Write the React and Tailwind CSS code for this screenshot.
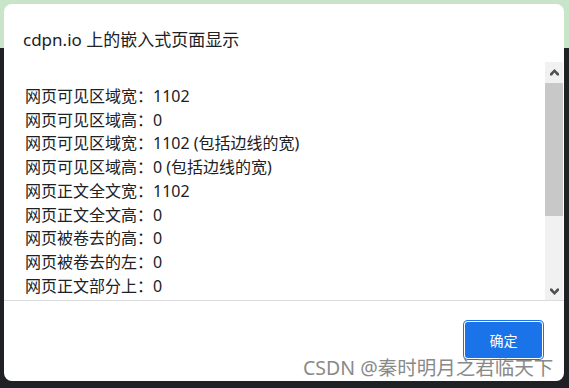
export default function App() {
  const rows = [
    "网页可见区域宽：1102",
    "网页可见区域高：0",
    "网页可见区域宽：1102 (包括边线的宽)",
    "网页可见区域高：0 (包括边线的宽)",
    "网页正文全文宽：1102",
    "网页正文全文高：0",
    "网页被卷去的高：0",
    "网页被卷去的左：0",
    "网页正文部分上：0",
  ];
  const font = { fontFamily: '"Noto Sans", "Noto Sans CJK SC", sans-serif' };
  return (
    <div
      className="relative w-[569px] h-[388px] overflow-hidden pt-[4px] pl-[4px] bg-[linear-gradient(to_bottom,#c8e4c9_48px,#202124_48px)]"
      style={font}
    >
      <div className="w-[560px] h-[377px] bg-white rounded-[8px] flex flex-col text-[#202124]">
        <div className="h-[58px] pt-[24px] pl-[19px] text-[17px] leading-[24px]">
          cdpn.io 上的嵌入式页面显示
        </div>
        <div className="h-[238px] flex">
          <div className="flex-1 overflow-hidden pt-[23px] pl-[21px] text-[16px] leading-[23.7px]">
            {rows.map((r, i) => (
              <div key={i} className="whitespace-nowrap">{r}</div>
            ))}
          </div>
          <div className="w-[18px] mr-[1px] bg-[#f1f1f1] flex flex-col">
            <div className="h-[21px] flex items-center justify-center">
              <svg width="9" height="7" viewBox="0 0 9 7">
                <path d="M4.5 0 L9 4.5 L9 6.5 L7 6.5 L4.5 3.5 L2 6.5 L0 6.5 L0 4.5 Z" fill="#505050" />
              </svg>
            </div>
            <div className="h-[133px] bg-[#c8c8c8]" />
            <div className="flex-1" />
            <div className="h-[18px] flex items-center justify-center">
              <svg width="9" height="7" viewBox="0 0 9 7">
                <path d="M4.5 7 L9 2.5 L9 0.5 L7 0.5 L4.5 3.5 L2 0.5 L0 0.5 L0 2.5 Z" fill="#505050" />
              </svg>
            </div>
          </div>
        </div>
        <div className="border-t border-[#dadce0] flex-1 flex justify-end pt-[19px] pr-[20px]">
          <button className="w-[81px] h-[40px] rounded-[5px] bg-[#1a73e8] text-white text-[14px] shadow-[inset_0_0_0_1px_#1a73e8,inset_0_0_0_2px_#ffffff]">
            确定
          </button>
        </div>
      </div>
      <div className="absolute left-[303px] top-[356px] text-[19.5px] leading-[24px] text-[#7d7d7d] whitespace-nowrap opacity-90">
        CSDN @秦时明月之君临天下
      </div>
    </div>
  );
}
